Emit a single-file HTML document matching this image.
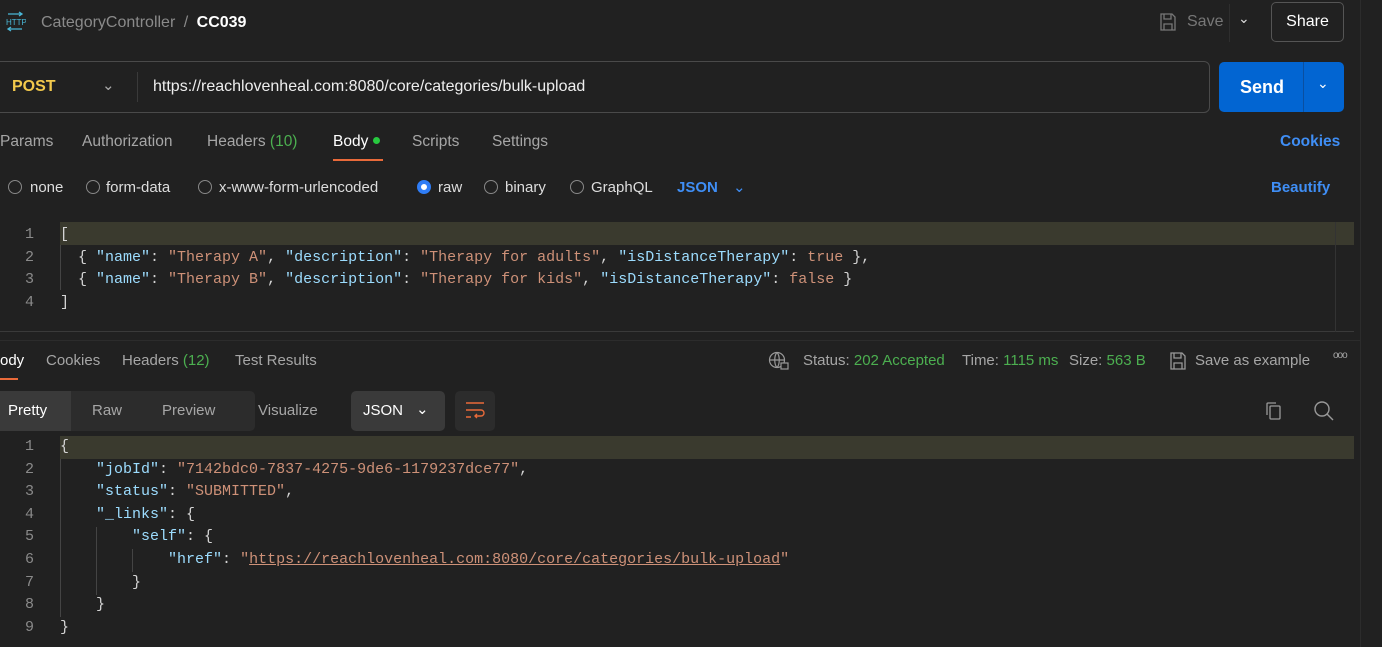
<!DOCTYPE html>
<html><head><meta charset="utf-8"><style>
*{margin:0;padding:0;box-sizing:border-box}
body{width:1382px;height:647px;background:#212121;font-family:"Liberation Sans",sans-serif;color:#a6a6a6;position:relative;overflow:hidden;font-size:15px}
.a{position:absolute;white-space:nowrap}
.mono{font-family:"Liberation Mono",monospace;font-size:15px}
.k{color:#9cdcfe}.s{color:#ce9178}.p{color:#d4d4d4}.ln{color:#8a8a8a;width:20px;text-align:right}
.w{color:#fff}.g{color:#4caf50}.b{color:#3f8ef5}
.radio{position:absolute;width:14px;height:14px;border:1px solid #888;border-radius:50%;top:180px}
</style></head><body>
<!-- top bar -->
<svg class="a" style="left:4px;top:11px" width="22" height="22" viewBox="0 0 22 22"><g stroke="#4ab8d8" fill="none" stroke-width="1.3"><path d="M4 3h14M15 1l3 2-3 2M4 18h14M7 16l-3 2 3 2"/></g><text x="2" y="14" font-size="8" fill="#4ab8d8" font-family="Liberation Sans">HTTP</text></svg>
<div class="a" style="left:41px;top:14px;font-size:16px;color:#8a8a8a">CategoryController <span style="margin:0 4px">/</span> <b style="color:#fff">CC039</b></div>
<svg class="a" style="left:1159px;top:12px" width="18" height="20" viewBox="0 0 18 20"><path d="M2 2h11l3 3v13H2z M5 2v5h7V2 M5 18v-6h8v6" fill="none" stroke="#777" stroke-width="1.3"/></svg>
<div class="a" style="left:1187px;top:13px;font-size:16px;color:#777">Save</div>
<div class="a" style="left:1229px;top:4px;width:1px;height:38px;background:#2e2e2e"></div>
<div class="a" style="left:1238px;top:10px;color:#ddd;font-size:14px">&#8964;</div>
<div class="a" style="left:1271px;top:2px;width:73px;height:40px;border:1px solid #555;border-radius:5px;color:#fff;font-size:16px;text-align:center;line-height:38px">Share</div>
<div class="a" style="left:1360px;top:0;width:1px;height:647px;background:#2c2c2c"></div>
<!-- url -->
<div class="a" style="left:-6px;top:61px;width:1216px;height:52px;border:1px solid #4a4a4a;border-radius:6px;background:#212121"></div>
<div class="a" style="left:12px;top:78px;color:#f2c94c;font-weight:bold;font-size:16px">POST</div>
<div class="a" style="left:102px;top:76px;color:#aaa;font-size:15px">&#8964;</div>
<div class="a" style="left:137px;top:72px;width:1px;height:30px;background:#3a3a3a"></div>
<div class="a" style="left:153px;top:78px;color:#eee;font-size:16px">https://reachlovenheal.com:8080/core/categories/bulk-upload</div>
<div class="a" style="left:1219px;top:62px;width:125px;height:50px;background:#0265d2;border-radius:5px"></div>
<div class="a" style="left:1303px;top:62px;width:1px;height:50px;background:#0a4fa0"></div>
<div class="a" style="left:1240px;top:77px;color:#fff;font-weight:bold;font-size:18px">Send</div>
<div class="a" style="left:1317px;top:75px;color:#fff;font-size:14px">&#8964;</div>
<!-- tabs -->
<div class="a" style="top:133px;left:0;font-size:15.5px">Params</div>
<div class="a" style="top:133px;left:82px;font-size:15.5px">Authorization</div>
<div class="a" style="top:133px;left:207px;font-size:15.5px">Headers <span class="g">(10)</span></div>
<div class="a w" style="top:133px;left:333px;font-size:15.5px">Body <span style="display:inline-block;width:7px;height:7px;border-radius:50%;background:#27c93f;vertical-align:2px"></span></div>
<div class="a" style="left:333px;top:159px;width:50px;height:2px;background:#e96a3a"></div>
<div class="a" style="top:133px;left:412px;font-size:15.5px">Scripts</div>
<div class="a" style="top:133px;left:492px;font-size:15.5px">Settings</div>
<div class="a b" style="top:133px;left:1280px;font-weight:bold;font-size:15.5px">Cookies</div>
<!-- radios -->
<div class="radio" style="left:8px"></div><div class="a" style="left:30px;top:179px;color:#ddd">none</div>
<div class="radio" style="left:86px"></div><div class="a" style="left:106px;top:179px;color:#ddd">form-data</div>
<div class="radio" style="left:198px"></div><div class="a" style="left:219px;top:179px;color:#ddd">x-www-form-urlencoded</div>
<div class="radio" style="left:417px;border:4px solid #2f7df6;background:#fff"></div><div class="a" style="left:438px;top:179px;color:#ddd">raw</div>
<div class="radio" style="left:484px"></div><div class="a" style="left:505px;top:179px;color:#ddd">binary</div>
<div class="radio" style="left:570px"></div><div class="a" style="left:591px;top:179px;color:#ddd">GraphQL</div>
<div class="a b" style="left:677px;top:179px;font-weight:bold">JSON</div>
<div class="a b" style="left:733px;top:178px">&#8964;</div>
<div class="a b" style="left:1271px;top:179px;font-weight:bold">Beautify</div>
<!-- editor -->
<div class="a" style="left:60px;top:222px;width:1294px;height:23px;background:#3a3a2e"></div>
<div class="a" style="left:0;top:331px;width:1354px;height:1px;background:#3a3a3a"></div>
<div class="a" style="left:1335px;top:222px;width:1px;height:110px;background:#333"></div>
<div class="a" style="left:0;top:340px;width:1360px;height:1px;background:#2c2c2c"></div>
<div class="a" style="left:60px;top:245px;width:1px;height:45px;background:#444"></div>
<div class="a mono" style="left:14px;top:224px;line-height:22.6px">
<div><span class="a ln" style="left:0">1</span><span style="margin-left:46px" class="p">[</span></div>
<div><span class="a ln" style="left:0">2</span><span style="margin-left:46px" class="p">  { <span class="k">"name"</span>: <span class="s">"Therapy A"</span>, <span class="k">"description"</span>: <span class="s">"Therapy for adults"</span>, <span class="k">"isDistanceTherapy"</span>: <span class="s">true</span> },</span></div>
<div><span class="a ln" style="left:0">3</span><span style="margin-left:46px" class="p">  { <span class="k">"name"</span>: <span class="s">"Therapy B"</span>, <span class="k">"description"</span>: <span class="s">"Therapy for kids"</span>, <span class="k">"isDistanceTherapy"</span>: <span class="s">false</span> }</span></div>
<div><span class="a ln" style="left:0">4</span><span style="margin-left:46px" class="p">]</span></div>
</div>
<!-- response tabs -->
<div class="a w" style="left:0;top:352px">ody</div>
<div class="a" style="left:0;top:378px;width:18px;height:2px;background:#e96a3a"></div>
<div class="a" style="left:46px;top:352px">Cookies</div>
<div class="a" style="left:122px;top:352px">Headers <span class="g">(12)</span></div>
<div class="a" style="left:235px;top:352px">Test Results</div>
<svg class="a" style="left:768px;top:351px" width="22" height="20" viewBox="0 0 22 20"><g fill="none" stroke="#999" stroke-width="1.2"><circle cx="9" cy="9" r="7.5"/><path d="M1.5 9h15M9 1.5c-3 3-3 12 0 15M9 1.5c3 3 3 12 0 15"/><rect x="13" y="12" width="7" height="6" fill="#212121"/></g></svg>
<div class="a" style="left:803px;top:352px">Status: <span class="g">202 Accepted</span></div>
<div class="a" style="left:962px;top:352px">Time: <span class="g">1115 ms</span></div>
<div class="a" style="left:1069px;top:352px">Size: <span class="g">563 B</span></div>
<svg class="a" style="left:1169px;top:351px" width="18" height="20" viewBox="0 0 18 20"><path d="M2 2h11l3 3v13H2z M5 2v5h7V2 M5 18v-6h8v6" fill="none" stroke="#999" stroke-width="1.3"/></svg>
<div class="a" style="left:1195px;top:352px">Save as example</div>
<div class="a" style="left:1333px;top:350px;font-size:10px;letter-spacing:-1px">ooo</div>
<!-- pretty bar -->
<div class="a" style="left:0;top:391px;width:255px;height:40px;background:#2c2c2c;border-radius:0 5px 5px 0"></div>
<div class="a" style="left:0;top:391px;width:71px;height:40px;background:#3a3a3a"></div>
<div class="a w" style="left:8px;top:402px">Pretty</div>
<div class="a" style="left:92px;top:402px">Raw</div>
<div class="a" style="left:162px;top:402px">Preview</div>
<div class="a" style="left:258px;top:402px">Visualize</div>
<div class="a" style="left:351px;top:391px;width:94px;height:40px;background:#3a3a3a;border-radius:5px"></div>
<div class="a w" style="left:363px;top:402px">JSON</div>
<div class="a w" style="left:416px;top:400px">&#8964;</div>
<div class="a" style="left:455px;top:391px;width:40px;height:40px;background:#2c2c2c;border-radius:5px"></div>
<svg class="a" style="left:465px;top:401px" width="20" height="20" viewBox="0 0 20 20"><g fill="none" stroke="#e96a3a" stroke-width="1.4"><path d="M1 2h18M1 9h15a3 3 0 0 1 0 6h-6M12 13l-2 2 2 2M1 16h5"/></g></svg>
<svg class="a" style="left:1264px;top:401px" width="20" height="20" viewBox="0 0 20 20"><g fill="none" stroke="#999" stroke-width="1.3"><rect x="6" y="5" width="10" height="13" rx="1"/><path d="M3 14V3a1 1 0 0 1 1-1h8"/></g></svg>
<svg class="a" style="left:1313px;top:400px" width="22" height="22" viewBox="0 0 22 22"><g fill="none" stroke="#999" stroke-width="1.4"><circle cx="9" cy="9" r="7"/><path d="M14 14l6 6"/></g></svg>
<!-- response code -->
<div class="a" style="left:60px;top:436px;width:1294px;height:23px;background:#3a3a2e"></div>
<div class="a" style="left:60px;top:459px;width:1px;height:158px;background:#444"></div>
<div class="a" style="left:96px;top:527px;width:1px;height:68px;background:#444"></div>
<div class="a" style="left:132px;top:549px;width:1px;height:23px;background:#444"></div>
<div class="a mono" style="left:14px;top:436px;line-height:22.6px">
<div><span class="a ln" style="left:0">1</span><span style="margin-left:46px" class="p">{</span></div>
<div><span class="a ln" style="left:0">2</span><span style="margin-left:46px" class="p">    <span class="k">"jobId"</span>: <span class="s">"7142bdc0-7837-4275-9de6-1179237dce77"</span>,</span></div>
<div><span class="a ln" style="left:0">3</span><span style="margin-left:46px" class="p">    <span class="k">"status"</span>: <span class="s">"SUBMITTED"</span>,</span></div>
<div><span class="a ln" style="left:0">4</span><span style="margin-left:46px" class="p">    <span class="k">"_links"</span>: {</span></div>
<div><span class="a ln" style="left:0">5</span><span style="margin-left:46px" class="p">        <span class="k">"self"</span>: {</span></div>
<div><span class="a ln" style="left:0">6</span><span style="margin-left:46px" class="p">            <span class="k">"href"</span>: <span class="s">"<u>https://reachlovenheal.com:8080/core/categories/bulk-upload</u>"</span></span></div>
<div><span class="a ln" style="left:0">7</span><span style="margin-left:46px" class="p">        }</span></div>
<div><span class="a ln" style="left:0">8</span><span style="margin-left:46px" class="p">    }</span></div>
<div><span class="a ln" style="left:0">9</span><span style="margin-left:46px" class="p">}</span></div>
</div>
<style>.mono div{white-space:pre;position:relative}</style>
</body></html>
